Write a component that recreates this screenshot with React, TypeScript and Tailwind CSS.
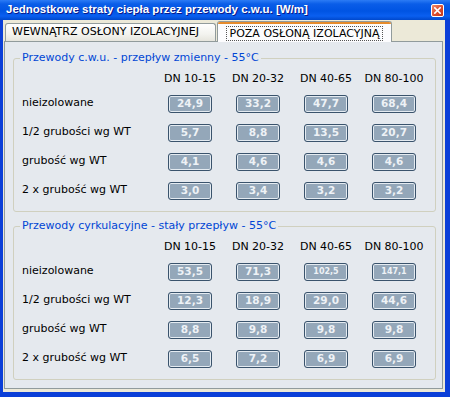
import React from "react";

const cols = ["DN 10-15", "DN 20-32", "DN 40-65", "DN 80-100"];

const groups = [
  {
    title: "Przewody c.w.u. - przepływ zmienny - 55°C",
    rows: [
      { label: "nieizolowane", values: ["24,9", "33,2", "47,7", "68,4"] },
      { label: "1/2 grubości wg WT", values: ["5,7", "8,8", "13,5", "20,7"] },
      { label: "grubość wg WT", values: ["4,1", "4,6", "4,6", "4,6"] },
      { label: "2 x grubość wg WT", values: ["3,0", "3,4", "3,2", "3,2"] },
    ],
  },
  {
    title: "Przewody cyrkulacyjne - stały przepływ - 55°C",
    rows: [
      { label: "nieizolowane", values: ["53,5", "71,3", "102,5", "147,1"] },
      { label: "1/2 grubości wg WT", values: ["12,3", "18,9", "29,0", "44,6"] },
      { label: "grubość wg WT", values: ["8,8", "9,8", "9,8", "9,8"] },
      { label: "2 x grubość wg WT", values: ["6,5", "7,2", "6,9", "6,9"] },
    ],
  },
];

const ValueBox = ({ value }: { value: string }) => (
  <div className="w-[44px] h-[18px] flex items-center justify-center rounded-[3px] border border-[#3a536c] bg-[#94a7b9] shadow-[inset_0_0_0_1px_#e4ebf1]">
    <span
      className={
        value.length > 4
          ? "text-[8px] font-bold text-[#eef2f6] leading-none"
          : "text-[10.5px] font-bold text-[#eef2f6] leading-none"
      }
    >
      {value}
    </span>
  </div>
);

const Group = ({ title, rows, className }: { title: string; rows: { label: string; values: string[] }[]; className?: string }) => (
  <fieldset className={"border border-[#d0d0bf] rounded-[3px] pb-[6px] " + (className ?? "")}>
    <legend className="ml-[6px] px-[2px] h-[14px] leading-[14px] text-[11px] text-[#0046d5]">{title}</legend>
    <div className="grid grid-cols-[142px_68px_68px_68px_68px] mt-[6px] mb-[2px] h-[16px] items-center">
      <div />
      {cols.map((c) => (
        <div key={c} className="text-center text-[11px] text-black whitespace-nowrap">
          {c}
        </div>
      ))}
    </div>
    {rows.map((r) => (
      <div key={r.label} className="grid grid-cols-[142px_68px_68px_68px_68px] h-[29px] items-center">
        <div className="pl-[8px] text-[11px] text-black whitespace-nowrap">{r.label}</div>
        {r.values.map((v, i) => (
          <div key={i} className="flex justify-center">
            <ValueBox value={v} />
          </div>
        ))}
      </div>
    ))}
  </fieldset>
);

export default function App() {
  return (
    <div
      className="w-[450px] h-[397px] flex flex-col bg-[#0b3fd8] overflow-hidden"
      style={{ fontFamily: '"DejaVu Sans", Verdana, sans-serif' }}
    >
      {/* title bar */}
      <div className="h-[20px] flex items-center justify-between pl-[6px] pr-[6px] bg-[linear-gradient(to_bottom,#2c7bf5_0%,#0a5de8_20%,#0054e3_55%,#0a5ff0_80%,#0048cc_100%)]">
        <span
          className="text-white font-bold text-[11.5px] whitespace-nowrap [text-shadow:1px_1px_#0a1a8a]"
          style={{ fontFamily: '"Liberation Sans", Arial, sans-serif' }}
        >
          Jednostkowe straty ciepła przez przewody c.w.u. [W/m]
        </span>
        <div className="w-[13px] h-[13px] rounded-[2px] border border-white bg-[linear-gradient(135deg,#f08a6a,#d8472a_60%,#c43a1c)] flex items-center justify-center">
          <svg width="7" height="7" viewBox="0 0 7 7">
            <path d="M0.8 0.8 L6.2 6.2 M6.2 0.8 L0.8 6.2" stroke="white" strokeWidth="1.6" strokeLinecap="square" />
          </svg>
        </div>
      </div>

      {/* client */}
      <div className="flex-1 ml-[3px] mr-[5px] mb-[5px] bg-[#ece9d8] pl-[1px] pr-[2px] pb-[3px] flex flex-col">
        <div className="flex items-end h-[21px] pl-[1px]">
          <div className="h-[18px] w-[211px] flex items-center pl-[6px] border border-b-0 border-[#919b9c] rounded-t-[3px] bg-[linear-gradient(to_bottom,#ffffff,#f3f3ef_60%,#e6e5dd)] text-[11px] text-black whitespace-nowrap">
            WEWNĄTRZ OSŁONY IZOLACYJNEJ
          </div>
          <div className="relative z-10 mb-[-1px] ml-[1px] h-[21px] w-[175px] flex flex-col border border-b-0 border-[#919b9c] rounded-t-[3px] bg-[#fcfcfe] overflow-hidden">
            <div className="h-[2px] bg-[#e68b2c] shrink-0" />
            <div className="flex-1 flex items-center justify-center">
              <span className="border border-dotted border-[#555] px-[3px] leading-[13px] text-[11px] text-black whitespace-nowrap">
                POZA OSŁONĄ IZOLACYJNĄ
              </span>
            </div>
          </div>
        </div>
        <div className="flex-1 border border-[#919b9c] bg-[#e5e9ee] pt-[9px] pl-[8px] pr-[6px] pb-[8px] flex flex-col">
          <Group title={groups[0].title} rows={groups[0].rows} />
          <Group title={groups[1].title} rows={groups[1].rows} className="mt-[7px]" />
        </div>
      </div>
    </div>
  );
}
